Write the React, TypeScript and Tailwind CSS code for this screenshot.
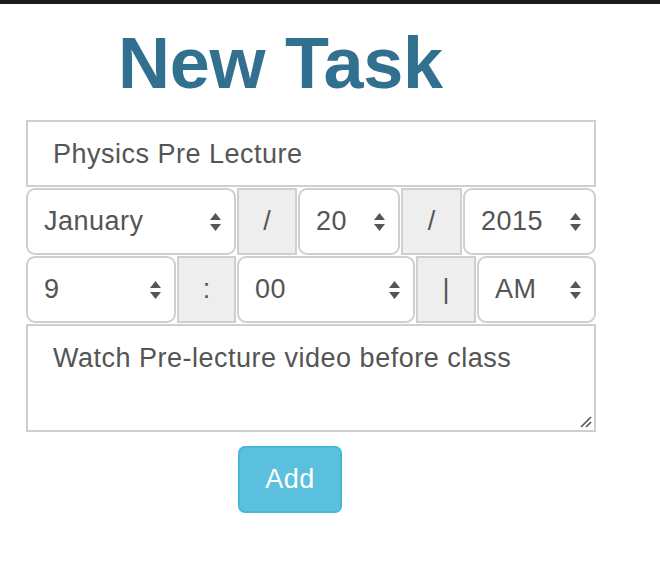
import React from 'react';

const font = { fontFamily: '"Liberation Sans", Arial, sans-serif' };

const Arrows: React.FC = () => (
  <svg width="11" height="18" viewBox="0 0 11 18" className="pointer-events-none absolute right-[15px] top-1/2 -translate-y-1/2">
    <path d="M5.5 0 L11 7 L0 7 Z" fill="#555" />
    <path d="M0 11 L11 11 L5.5 18 Z" fill="#555" />
  </svg>
);

const Select: React.FC<{ value: string; className: string }> = ({ value, className }) => (
  <div className={`relative h-full ${className}`}>
    <select
      defaultValue={value}
      className="h-full w-full appearance-none rounded-[9px] border-2 border-[#cfcfcf] bg-white pl-[16px] text-[27px] tracking-[0.5px] text-[#555] outline-none"
    >
      <option>{value}</option>
    </select>
    <Arrows />
  </div>
);

const Addon: React.FC<{ children: React.ReactNode; className: string }> = ({ children, className }) => (
  <div className={`flex h-full items-center justify-center border-2 border-[#cfcfcf] bg-[#eee] text-[27px] text-[#555] ${className}`}>
    {children}
  </div>
);

export default function App() {
  return (
    <div className="min-h-[562px] w-[660px] bg-white" style={font}>
      <div className="h-[4px] bg-[#1c1c1c]" />
      <h1 className="ml-[118px] mt-[11px] text-[72px] font-bold leading-[96px] tracking-[-0.25px] text-[#31708f]">New Task</h1>
      <form className="ml-[26px] mt-[9px] flex w-[570px] flex-col gap-[1px]">
        <input
          defaultValue="Physics Pre Lecture"
          className="h-[67px] w-full border-2 border-[#cfcfcf] bg-white pl-[25px] pt-[2px] text-[27px] tracking-[0.5px] text-[#555] outline-none"
        />
        <div className="flex h-[67px] gap-[1px]">
          <Select value="January" className="w-[210px]" />
          <Addon className="w-[60px]">/</Addon>
          <Select value="20" className="w-[102px]" />
          <Addon className="w-[61px]">/</Addon>
          <Select value="2015" className="w-[133px]" />
        </div>
        <div className="flex h-[67px] gap-[1px]">
          <Select value="9" className="w-[150px]" />
          <Addon className="w-[59px]">:</Addon>
          <Select value="00" className="w-[178px]" />
          <Addon className="w-[60px]">|</Addon>
          <Select value="AM" className="w-[119px]" />
        </div>
        <div className="relative">
          <textarea
            defaultValue="Watch Pre-lecture video before class"
            className="block h-[108px] w-full resize-none border-2 border-[#cfcfcf] bg-white px-[25px] pt-[14px] text-[27px] leading-[36px] tracking-[0.5px] text-[#555] outline-none"
          />
          <svg width="12" height="12" viewBox="0 0 12 12" className="pointer-events-none absolute bottom-[4px] right-[4px]">
            <path d="M1 11 L11 1 M6 11 L11 6" stroke="#555" strokeWidth="1.6" />
          </svg>
        </div>
        <div className="mt-[13px] flex pl-[212px]">
          <button
            type="button"
            className="h-[67px] w-[104px] rounded-[7px] border-2 border-[#46b8da] bg-[#5bc0de] text-[27px] tracking-[0.5px] text-white"
          >
            Add
          </button>
        </div>
      </form>
    </div>
  );
}
